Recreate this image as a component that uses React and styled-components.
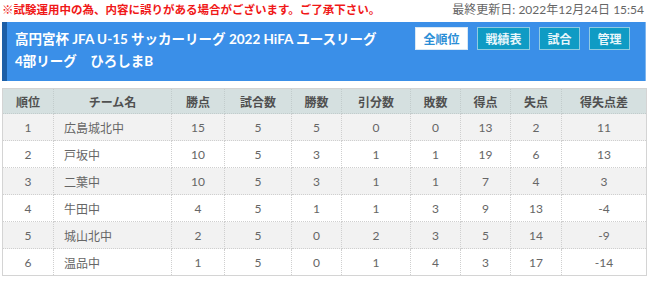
import React from 'react'
import styled, { createGlobalStyle } from 'styled-components'

const GlobalStyle = createGlobalStyle`
  body {
    margin: 0;
    background: #fff;
    font-family: Lato, "Noto Sans CJK JP", sans-serif;
  }
`

const Page = styled.div`
  padding: 0 4px 0 2px;
`

const Notice = styled.div`
  display: flex;
  justify-content: space-between;
  align-items: center;
  height: 19px;
  font-size: 12px;
  line-height: 16px;
`

const Warn = styled.span`
  color: #f01818;
  font-weight: bold;
  font-size: 11.5px;
`

const Updated = styled.span`
  color: #666;
  padding-right: 2px;
`

const Banner = styled.div`
  margin-top: 3px;
  height: 59px;
  background: #3a8fe8;
  border-left: 5px solid #1c5ea6;
  border-right: 1px solid #7fb6ee;
  display: flex;
  justify-content: space-between;
  padding: 4px 15px 0 8px;
  box-sizing: border-box;
`

const Title = styled.div`
  color: #fff;
  font-weight: bold;
  font-size: 13.5px;
  line-height: 22px;
  padding-top: 2px;
`

const Buttons = styled.div`
  display: flex;
  gap: 9px;
  padding-top: 1px;
`

const Btn = styled.div`
  height: 23px;
  padding: 0 7.5px;
  box-sizing: border-box;
  display: flex;
  align-items: center;
  font-size: 12px;
  font-weight: bold;
  background: ${p => (p.$active ? '#fff' : '#0f9bc4')};
  color: ${p => (p.$active ? '#2a8ed6' : '#e8f6fb')};
  border: 1px solid ${p => (p.$active ? '#d8e8f4' : '#8fcbe2')};
`

const Table = styled.table`
  margin-top: 7px;
  width: 644px;
  border-collapse: collapse;
  table-layout: fixed;
  font-size: 12px;
  color: #666;
  border: 1px solid #d4d4d4;
`

const Th = styled.th`
  height: 24px;
  padding: 0;
  background: #d5e0e0;
  color: #505050;
  font-weight: bold;
  border: 1px dotted #c2cccc;
  text-align: center;
`

const Tr = styled.tr`
  background: ${p => (p.$odd ? '#f2f2f2' : '#fff')};
`

const Td = styled.td`
  height: 26px;
  padding: 0;
  text-align: ${p => (p.$left ? 'left' : 'center')};
  padding-left: ${p => (p.$left ? '10px' : '0')};
  border: 1px dotted #cfcfcf;
`

const cols = [51, 118, 53, 67, 50, 69, 50, 50, 51, 85]
const heads = ['順位', 'チーム名', '勝点', '試合数', '勝数', '引分数', '敗数', '得点', '失点', '得失点差']

const rows = [
  [1, '広島城北中', 15, 5, 5, 0, 0, 13, 2, 11],
  [2, '戸坂中', 10, 5, 3, 1, 1, 19, 6, 13],
  [3, '二葉中', 10, 5, 3, 1, 1, 7, 4, 3],
  [4, '牛田中', 4, 5, 1, 1, 3, 9, 13, -4],
  [5, '城山北中', 2, 5, 0, 2, 3, 5, 14, -9],
  [6, '温品中', 1, 5, 0, 1, 4, 3, 17, -14],
]

const App = () => (
  <Page>
    <GlobalStyle />
    <Notice>
      <Warn>※試験運用中の為、内容に誤りがある場合がございます。ご了承下さい。</Warn>
      <Updated>最終更新日: 2022年12月24日 15:54</Updated>
    </Notice>
    <Banner>
      <Title>
        <div>高円宮杯 JFA U-15 サッカーリーグ 2022 HiFA ユースリーグ</div>
        <div>4部リーグ　ひろしまB</div>
      </Title>
      <Buttons>
        <Btn $active>全順位</Btn>
        <Btn>戦績表</Btn>
        <Btn>試合</Btn>
        <Btn>管理</Btn>
      </Buttons>
    </Banner>
    <Table>
      <colgroup>
        {cols.map((w, i) => (
          <col key={i} style={{ width: w }} />
        ))}
      </colgroup>
      <thead>
        <tr>
          {heads.map(h => (
            <Th key={h}>{h}</Th>
          ))}
        </tr>
      </thead>
      <tbody>
        {rows.map((r, k) => (
          <Tr key={k} $odd={k % 2 === 0}>
            {r.map((v, i) => (
              <Td key={i} $left={i === 1}>
                {v}
              </Td>
            ))}
          </Tr>
        ))}
      </tbody>
    </Table>
  </Page>
)

export default App
